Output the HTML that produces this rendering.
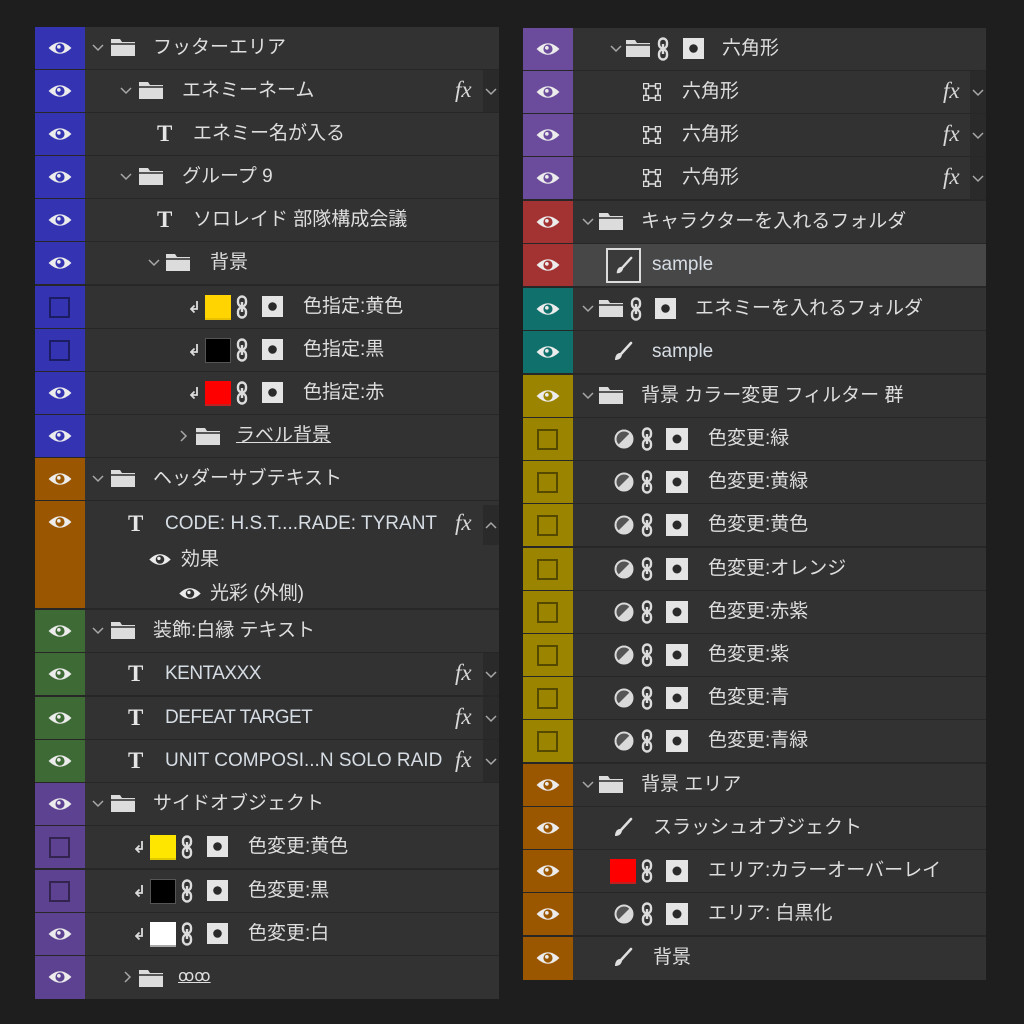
<!DOCTYPE html>
<html><head><meta charset="utf-8">
<style>
*{margin:0;padding:0;box-sizing:border-box}
body{width:1024px;height:1024px;background:#1e1e1e;position:relative;overflow:hidden;font-family:"Liberation Sans","Noto Sans CJK JP",sans-serif}
.p{position:absolute;background:#272727}
.r{position:absolute;left:0;right:0;height:42px;background:#323232}
.e{position:absolute;left:0;top:0;width:50px;height:100%}
.e>svg{left:12px!important;top:13px!important;width:26px;height:16px}
.bx{position:absolute;left:14px;top:11px;width:21px;height:21px;border:2px solid rgba(0,0,0,.45)}
.i{position:absolute}
.t{position:absolute;top:0;line-height:42px;font-size:19px;color:#dedede;white-space:nowrap}
.T{position:absolute;top:0;line-height:42px;font-size:23px;font-weight:bold;color:#e6e6e6;font-family:"Liberation Serif",serif}
.fx{position:absolute;top:0;line-height:40px;font-size:23px;font-style:italic;color:#d8d8d8;font-family:"Liberation Serif",serif}
.cb{position:absolute;top:0;width:16px;height:42px;background:#2a2a2a}
.sw{position:absolute;top:9px;width:26px;height:25px}
.u{text-decoration:underline}
</style></head><body>
<svg width="0" height="0" style="position:absolute">
<defs>
<symbol id="eye" viewBox="0 0 22 14"><path d="M1 7Q11 -3 21 7Q11 17 1 7Z" fill="#ececec"/><circle cx="11" cy="7" r="4" fill="currentColor"/><circle cx="10" cy="6" r="1.6" fill="#ececec"/></symbol>
<symbol id="ch" viewBox="0 0 12 8"><polyline points="1,1 6,6 11,1" fill="none" stroke="#a8a8a8" stroke-width="1.5"/></symbol>
<symbol id="cu" viewBox="0 0 12 8"><polyline points="1,7 6,2 11,7" fill="none" stroke="#a8a8a8" stroke-width="1.5"/></symbol>
<symbol id="cr" viewBox="0 0 8 12"><polyline points="1,1 6,6 1,11" fill="none" stroke="#a8a8a8" stroke-width="1.5"/></symbol>
<symbol id="fo" viewBox="0 0 26 20"><path d="M1 2h9l2 3h13v14H1z" fill="#dcdcdc"/><path d="M1 7h24" stroke="#2a2a2a" stroke-width="1.5"/></symbol>
<symbol id="ln" viewBox="0 0 12 24"><rect x="2" y="1.5" width="8" height="10" rx="4" fill="none" stroke="#dcdcdc" stroke-width="2.4"/><rect x="2" y="12.5" width="8" height="10" rx="4" fill="none" stroke="#dcdcdc" stroke-width="2.4"/><path d="M6 7v10" stroke="#dcdcdc" stroke-width="2.4"/></symbol>
<symbol id="mk" viewBox="0 0 22 22"><rect x="0" y="0" width="22" height="22" fill="#e4e4e4"/><circle cx="11" cy="11" r="4.5" fill="#2a2a2a"/></symbol>
<symbol id="adj" viewBox="0 0 20 20"><circle cx="10" cy="10" r="8.5" fill="#dadada"/><path d="M4 16L16 4A8.5 8.5 0 0 0 4 16Z" fill="#555"/><circle cx="10" cy="10" r="8.5" fill="none" stroke="#dadada" stroke-width="2"/></symbol>
<symbol id="br" viewBox="0 0 22 22"><path d="M19 2L9 13" stroke="#e0e0e0" stroke-width="2.6" stroke-linecap="round"/><path d="M8 12c-3 0-5 3-5 7c3 0 6-1 7-5z" fill="#e0e0e0"/></symbol>
<symbol id="sh" viewBox="0 0 18 18"><rect x="3" y="3" width="12" height="12" fill="none" stroke="#dcdcdc" stroke-width="1.6"/><rect x="0.5" y="0.5" width="5" height="5" fill="#323232" stroke="#dcdcdc" stroke-width="1.4"/><rect x="12.5" y="0.5" width="5" height="5" fill="#323232" stroke="#dcdcdc" stroke-width="1.4"/><rect x="0.5" y="12.5" width="5" height="5" fill="#323232" stroke="#dcdcdc" stroke-width="1.4"/><rect x="12.5" y="12.5" width="5" height="5" fill="#323232" stroke="#dcdcdc" stroke-width="1.4"/></symbol>
<symbol id="cl" viewBox="0 0 10 14"><path d="M7 1v8H2" fill="none" stroke="#dcdcdc" stroke-width="1.8"/><path d="M4.5 5.5L1 9l3.5 3.5" fill="none" stroke="#dcdcdc" stroke-width="1.8"/></symbol>
</defs></svg>

<!-- LEFT PANEL -->
<div class="p" style="left:35px;top:27px;width:464px;height:972px">
<div class="r" style="top:0"><div class="e" style="background:#3434b3;color:#3434b3"><svg class="i"><use href="#eye"/></svg></div>
<svg class="i" style="left:57px;top:17px" width="12" height="8"><use href="#ch"/></svg><svg class="i" style="left:75px;top:10px" width="26" height="20"><use href="#fo"/></svg><span class="t" style="left:118px">フッターエリア</span></div>
<div class="r" style="top:43px"><div class="e" style="background:#3434b3;color:#3434b3"><svg class="i"><use href="#eye"/></svg></div>
<svg class="i" style="left:85px;top:17px" width="12" height="8"><use href="#ch"/></svg><svg class="i" style="left:103px;top:10px" width="26" height="20"><use href="#fo"/></svg><span class="t" style="left:147px">エネミーネーム</span>
<span class="fx" style="left:420px">fx</span><div class="cb" style="left:448px"><svg class="i" style="left:2px;top:18px" width="12" height="8"><use href="#ch"/></svg></div></div>
<div class="r" style="top:86px"><div class="e" style="background:#3434b3;color:#3434b3"><svg class="i"><use href="#eye"/></svg></div>
<span class="T" style="left:122px">T</span><span class="t" style="left:158px">エネミー名が入る</span></div>
<div class="r" style="top:129px"><div class="e" style="background:#3434b3;color:#3434b3"><svg class="i"><use href="#eye"/></svg></div>
<svg class="i" style="left:85px;top:17px" width="12" height="8"><use href="#ch"/></svg><svg class="i" style="left:103px;top:10px" width="26" height="20"><use href="#fo"/></svg><span class="t" style="left:147px">グループ 9</span></div>
<div class="r" style="top:172px"><div class="e" style="background:#3434b3;color:#3434b3"><svg class="i"><use href="#eye"/></svg></div>
<span class="T" style="left:122px">T</span><span class="t" style="left:158px">ソロレイド 部隊構成会議</span></div>
<div class="r" style="top:215px"><div class="e" style="background:#3434b3;color:#3434b3"><svg class="i"><use href="#eye"/></svg></div>
<svg class="i" style="left:113px;top:17px" width="12" height="8"><use href="#ch"/></svg><svg class="i" style="left:130px;top:10px" width="26" height="20"><use href="#fo"/></svg><span class="t" style="left:175px">背景</span></div>
<div class="r" style="top:259px"><div class="e" style="background:#3434b3"><div class="bx"></div></div>
<svg class="i" style="left:155px;top:14px" width="10" height="14"><use href="#cl"/></svg><div class="sw" style="left:170px;background:#ffd400;border-bottom:2px solid #e8c000"></div><svg class="i" style="left:201px;top:9px" width="12" height="24"><use href="#ln"/></svg><svg class="i" style="left:227px;top:10px" width="21" height="21"><use href="#mk"/></svg><span class="t" style="left:268px">色指定:黄色</span></div>
<div class="r" style="top:302px"><div class="e" style="background:#3434b3"><div class="bx"></div></div>
<svg class="i" style="left:155px;top:14px" width="10" height="14"><use href="#cl"/></svg><div class="sw" style="left:170px;background:#000;border:1px solid #555"></div><svg class="i" style="left:201px;top:9px" width="12" height="24"><use href="#ln"/></svg><svg class="i" style="left:227px;top:10px" width="21" height="21"><use href="#mk"/></svg><span class="t" style="left:268px">色指定:黒</span></div>
<div class="r" style="top:345px"><div class="e" style="background:#3434b3;color:#3434b3"><svg class="i"><use href="#eye"/></svg></div>
<svg class="i" style="left:155px;top:14px" width="10" height="14"><use href="#cl"/></svg><div class="sw" style="left:170px;background:#ff0000;border-bottom:2px solid #c02020"></div><svg class="i" style="left:201px;top:9px" width="12" height="24"><use href="#ln"/></svg><svg class="i" style="left:227px;top:10px" width="21" height="21"><use href="#mk"/></svg><span class="t" style="left:268px">色指定:赤</span></div>
<div class="r" style="top:388px"><div class="e" style="background:#3434b3;color:#3434b3"><svg class="i"><use href="#eye"/></svg></div>
<svg class="i" style="left:145px;top:15px" width="8" height="12"><use href="#cr"/></svg><svg class="i" style="left:160px;top:11px" width="26" height="20"><use href="#fo"/></svg><span class="t u" style="left:201px">ラベル背景 </span></div>
<div class="r" style="top:431px"><div class="e" style="background:#9a5600;color:#9a5600"><svg class="i"><use href="#eye"/></svg></div>
<svg class="i" style="left:57px;top:17px" width="12" height="8"><use href="#ch"/></svg><svg class="i" style="left:75px;top:10px" width="26" height="20"><use href="#fo"/></svg><span class="t" style="left:118px">ヘッダーサブテキスト</span></div>
<div class="r" style="top:474px;height:107px"><div class="e" style="background:#9a5600;color:#9a5600"><svg class="i"><use href="#eye"/></svg></div>
<span class="T" style="left:93px;top:2px">T</span><span class="t" style="left:130px;top:2px;color:#d6dde4">CODE: H.S.T....RADE: TYRANT</span>
<span class="fx" style="left:420px;top:2px">fx</span><div class="cb" style="left:448px;top:4px;height:40px"><svg class="i" style="left:2px;top:16px" width="12" height="8"><use href="#cu"/></svg></div>
<svg class="i" style="left:113px;top:51px;color:#323232" width="24" height="15"><use href="#eye"/></svg><span class="t" style="left:146px;top:38px">効果</span>
<svg class="i" style="left:143px;top:85px;color:#323232" width="24" height="15"><use href="#eye"/></svg><span class="t" style="left:175px;top:72px">光彩 (外側)</span></div>
<div class="r" style="top:583px"><div class="e" style="background:#3e6a36;color:#3e6a36"><svg class="i"><use href="#eye"/></svg></div>
<svg class="i" style="left:57px;top:17px" width="12" height="8"><use href="#ch"/></svg><svg class="i" style="left:75px;top:10px" width="26" height="20"><use href="#fo"/></svg><span class="t" style="left:118px">装飾:白縁 テキスト</span></div>
<div class="r" style="top:626px"><div class="e" style="background:#3e6a36;color:#3e6a36"><svg class="i"><use href="#eye"/></svg></div>
<span class="T" style="left:93px">T</span><span class="t" style="left:130px;color:#d6dde4;letter-spacing:-0.5px">KENTAXXX</span><span class="fx" style="left:420px">fx</span><div class="cb" style="left:448px"><svg class="i" style="left:2px;top:18px" width="12" height="8"><use href="#ch"/></svg></div></div>
<div class="r" style="top:670px"><div class="e" style="background:#3e6a36;color:#3e6a36"><svg class="i"><use href="#eye"/></svg></div>
<span class="T" style="left:93px">T</span><span class="t" style="left:130px;color:#d6dde4;letter-spacing:-0.5px">DEFEAT TARGET</span><span class="fx" style="left:420px">fx</span><div class="cb" style="left:448px"><svg class="i" style="left:2px;top:18px" width="12" height="8"><use href="#ch"/></svg></div></div>
<div class="r" style="top:713px"><div class="e" style="background:#3e6a36;color:#3e6a36"><svg class="i"><use href="#eye"/></svg></div>
<span class="T" style="left:93px">T</span><span class="t" style="left:130px;color:#d6dde4">UNIT COMPOSI...N SOLO RAID</span><span class="fx" style="left:420px">fx</span><div class="cb" style="left:448px"><svg class="i" style="left:2px;top:18px" width="12" height="8"><use href="#ch"/></svg></div></div>
<div class="r" style="top:756px"><div class="e" style="background:#5c4290;color:#5c4290"><svg class="i"><use href="#eye"/></svg></div>
<svg class="i" style="left:57px;top:17px" width="12" height="8"><use href="#ch"/></svg><svg class="i" style="left:75px;top:10px" width="26" height="20"><use href="#fo"/></svg><span class="t" style="left:118px">サイドオブジェクト</span></div>
<div class="r" style="top:799px"><div class="e" style="background:#5c4290"><div class="bx"></div></div>
<svg class="i" style="left:100px;top:14px" width="10" height="14"><use href="#cl"/></svg><div class="sw" style="left:115px;background:#ffe600;border-bottom:2px solid #e0c800"></div><svg class="i" style="left:146px;top:9px" width="12" height="24"><use href="#ln"/></svg><svg class="i" style="left:172px;top:10px" width="21" height="21"><use href="#mk"/></svg><span class="t" style="left:213px">色変更:黄色</span></div>
<div class="r" style="top:843px"><div class="e" style="background:#5c4290"><div class="bx"></div></div>
<svg class="i" style="left:100px;top:14px" width="10" height="14"><use href="#cl"/></svg><div class="sw" style="left:115px;background:#000;border:1px solid #555"></div><svg class="i" style="left:146px;top:9px" width="12" height="24"><use href="#ln"/></svg><svg class="i" style="left:172px;top:10px" width="21" height="21"><use href="#mk"/></svg><span class="t" style="left:213px">色変更:黒</span></div>
<div class="r" style="top:886px"><div class="e" style="background:#5c4290;color:#5c4290"><svg class="i"><use href="#eye"/></svg></div>
<svg class="i" style="left:100px;top:14px" width="10" height="14"><use href="#cl"/></svg><div class="sw" style="left:115px;background:#fff;border-bottom:2px solid #aaa"></div><svg class="i" style="left:146px;top:9px" width="12" height="24"><use href="#ln"/></svg><svg class="i" style="left:172px;top:10px" width="21" height="21"><use href="#mk"/></svg><span class="t" style="left:213px">色変更:白</span></div>
<div class="r" style="top:929px;height:43px"><div class="e" style="background:#5c4290;color:#5c4290"><svg class="i"><use href="#eye"/></svg></div>
<svg class="i" style="left:89px;top:15px" width="8" height="12"><use href="#cr"/></svg><svg class="i" style="left:103px;top:12px" width="26" height="20"><use href="#fo"/></svg><span class="t u" style="left:143px;font-size:16px">ꝏꝏ</span></div>
</div>

<!-- RIGHT PANEL -->
<div class="p" style="left:523px;top:28px;width:463px;height:952px">
<div class="r" style="top:0"><div class="e" style="background:#6b4c9c;color:#6b4c9c"><svg class="i"><use href="#eye"/></svg></div>
<svg class="i" style="left:87px;top:17px" width="12" height="8"><use href="#ch"/></svg><svg class="i" style="left:102px;top:10px" width="26" height="20"><use href="#fo"/></svg><svg class="i" style="left:134px;top:9px" width="12" height="24"><use href="#ln"/></svg><svg class="i" style="left:160px;top:10px" width="21" height="21"><use href="#mk"/></svg><span class="t" style="left:199px">六角形</span></div>
<div class="r" style="top:43px"><div class="e" style="background:#6b4c9c;color:#6b4c9c"><svg class="i"><use href="#eye"/></svg></div>
<svg class="i" style="left:120px;top:12px" width="18" height="18"><use href="#sh"/></svg><span class="t" style="left:159px">六角形</span><span class="fx" style="left:420px">fx</span><div class="cb" style="left:447px"><svg class="i" style="left:2px;top:18px" width="12" height="8"><use href="#ch"/></svg></div></div>
<div class="r" style="top:86px"><div class="e" style="background:#6b4c9c;color:#6b4c9c"><svg class="i"><use href="#eye"/></svg></div>
<svg class="i" style="left:120px;top:12px" width="18" height="18"><use href="#sh"/></svg><span class="t" style="left:159px">六角形</span><span class="fx" style="left:420px">fx</span><div class="cb" style="left:447px"><svg class="i" style="left:2px;top:18px" width="12" height="8"><use href="#ch"/></svg></div></div>
<div class="r" style="top:129px"><div class="e" style="background:#6b4c9c;color:#6b4c9c"><svg class="i"><use href="#eye"/></svg></div>
<svg class="i" style="left:120px;top:12px" width="18" height="18"><use href="#sh"/></svg><span class="t" style="left:159px">六角形</span><span class="fx" style="left:420px">fx</span><div class="cb" style="left:447px"><svg class="i" style="left:2px;top:18px" width="12" height="8"><use href="#ch"/></svg></div></div>
<div class="r" style="top:173px"><div class="e" style="background:#a33232;color:#a33232"><svg class="i"><use href="#eye"/></svg></div>
<svg class="i" style="left:59px;top:17px" width="12" height="8"><use href="#ch"/></svg><svg class="i" style="left:75px;top:10px" width="26" height="20"><use href="#fo"/></svg><span class="t" style="left:118px">キャラクターを入れるフォルダ</span></div>
<div class="r" style="top:216px;background:#474747"><div class="e" style="background:#a33232;color:#a33232"><svg class="i"><use href="#eye"/></svg></div>
<div class="i" style="left:83px;top:4px;width:35px;height:35px;border:2px solid #dcdcdc;background:#3a3a3a"><svg class="i" style="left:6px;top:6px" width="20" height="20"><use href="#br"/></svg></div><span class="t" style="left:129px;color:#d6dde4">sample</span></div>
<div class="r" style="top:260px"><div class="e" style="background:#0f706c;color:#0f706c"><svg class="i"><use href="#eye"/></svg></div>
<svg class="i" style="left:59px;top:17px" width="12" height="8"><use href="#ch"/></svg><svg class="i" style="left:75px;top:10px" width="26" height="20"><use href="#fo"/></svg><svg class="i" style="left:107px;top:9px" width="12" height="24"><use href="#ln"/></svg><svg class="i" style="left:132px;top:10px" width="21" height="21"><use href="#mk"/></svg><span class="t" style="left:172px">エネミーを入れるフォルダ</span></div>
<div class="r" style="top:303px"><div class="e" style="background:#0f706c;color:#0f706c"><svg class="i"><use href="#eye"/></svg></div>
<svg class="i" style="left:89px;top:10px" width="22" height="22"><use href="#br"/></svg><span class="t" style="left:129px;color:#d6dde4">sample</span></div>
<div class="r" style="top:347px"><div class="e" style="background:#9b8500;color:#9b8500"><svg class="i"><use href="#eye"/></svg></div>
<svg class="i" style="left:59px;top:17px" width="12" height="8"><use href="#ch"/></svg><svg class="i" style="left:75px;top:10px" width="26" height="20"><use href="#fo"/></svg><span class="t" style="left:118px">背景 カラー変更 フィルター 群</span></div>

<div class="r" style="top:390px"><div class="e" style="background:#9b8500"><div class="bx"></div></div><svg class="i" style="left:91px;top:11px" width="20" height="20"><use href="#adj"/></svg><svg class="i" style="left:118px;top:9px" width="12" height="24"><use href="#ln"/></svg><svg class="i" style="left:143px;top:10px" width="22" height="22"><use href="#mk"/></svg><span class="t" style="left:185px">色変更:緑</span></div>
<div class="r" style="top:433px"><div class="e" style="background:#9b8500"><div class="bx"></div></div><svg class="i" style="left:91px;top:11px" width="20" height="20"><use href="#adj"/></svg><svg class="i" style="left:118px;top:9px" width="12" height="24"><use href="#ln"/></svg><svg class="i" style="left:143px;top:10px" width="22" height="22"><use href="#mk"/></svg><span class="t" style="left:185px">色変更:黄緑</span></div>
<div class="r" style="top:476px"><div class="e" style="background:#9b8500"><div class="bx"></div></div><svg class="i" style="left:91px;top:11px" width="20" height="20"><use href="#adj"/></svg><svg class="i" style="left:118px;top:9px" width="12" height="24"><use href="#ln"/></svg><svg class="i" style="left:143px;top:10px" width="22" height="22"><use href="#mk"/></svg><span class="t" style="left:185px">色変更:黄色</span></div>
<div class="r" style="top:520px"><div class="e" style="background:#9b8500"><div class="bx"></div></div><svg class="i" style="left:91px;top:11px" width="20" height="20"><use href="#adj"/></svg><svg class="i" style="left:118px;top:9px" width="12" height="24"><use href="#ln"/></svg><svg class="i" style="left:143px;top:10px" width="22" height="22"><use href="#mk"/></svg><span class="t" style="left:185px">色変更:オレンジ</span></div>
<div class="r" style="top:563px"><div class="e" style="background:#9b8500"><div class="bx"></div></div><svg class="i" style="left:91px;top:11px" width="20" height="20"><use href="#adj"/></svg><svg class="i" style="left:118px;top:9px" width="12" height="24"><use href="#ln"/></svg><svg class="i" style="left:143px;top:10px" width="22" height="22"><use href="#mk"/></svg><span class="t" style="left:185px">色変更:赤紫</span></div>
<div class="r" style="top:606px"><div class="e" style="background:#9b8500"><div class="bx"></div></div><svg class="i" style="left:91px;top:11px" width="20" height="20"><use href="#adj"/></svg><svg class="i" style="left:118px;top:9px" width="12" height="24"><use href="#ln"/></svg><svg class="i" style="left:143px;top:10px" width="22" height="22"><use href="#mk"/></svg><span class="t" style="left:185px">色変更:紫</span></div>
<div class="r" style="top:649px"><div class="e" style="background:#9b8500"><div class="bx"></div></div><svg class="i" style="left:91px;top:11px" width="20" height="20"><use href="#adj"/></svg><svg class="i" style="left:118px;top:9px" width="12" height="24"><use href="#ln"/></svg><svg class="i" style="left:143px;top:10px" width="22" height="22"><use href="#mk"/></svg><span class="t" style="left:185px">色変更:青</span></div>
<div class="r" style="top:692px"><div class="e" style="background:#9b8500"><div class="bx"></div></div><svg class="i" style="left:91px;top:11px" width="20" height="20"><use href="#adj"/></svg><svg class="i" style="left:118px;top:9px" width="12" height="24"><use href="#ln"/></svg><svg class="i" style="left:143px;top:10px" width="22" height="22"><use href="#mk"/></svg><span class="t" style="left:185px">色変更:青緑</span></div>

<div class="r" style="top:736px"><div class="e" style="background:#9b5600;color:#9b5600"><svg class="i"><use href="#eye"/></svg></div>
<svg class="i" style="left:59px;top:17px" width="12" height="8"><use href="#ch"/></svg><svg class="i" style="left:75px;top:10px" width="26" height="20"><use href="#fo"/></svg><span class="t" style="left:118px">背景 エリア</span></div>
<div class="r" style="top:779px"><div class="e" style="background:#9b5600;color:#9b5600"><svg class="i"><use href="#eye"/></svg></div>
<svg class="i" style="left:89px;top:10px" width="22" height="22"><use href="#br"/></svg><span class="t" style="left:130px">スラッシュオブジェクト</span></div>
<div class="r" style="top:822px"><div class="e" style="background:#9b5600;color:#9b5600"><svg class="i"><use href="#eye"/></svg></div>
<div class="sw" style="left:87px;background:#ff0000;border-bottom:2px solid #c02020"></div><svg class="i" style="left:118px;top:9px" width="12" height="24"><use href="#ln"/></svg><svg class="i" style="left:143px;top:10px" width="22" height="22"><use href="#mk"/></svg><span class="t" style="left:185px">エリア:カラーオーバーレイ</span></div>
<div class="r" style="top:865px"><div class="e" style="background:#9b5600;color:#9b5600"><svg class="i"><use href="#eye"/></svg></div>
<svg class="i" style="left:91px;top:11px" width="20" height="20"><use href="#adj"/></svg><svg class="i" style="left:118px;top:9px" width="12" height="24"><use href="#ln"/></svg><svg class="i" style="left:143px;top:10px" width="22" height="22"><use href="#mk"/></svg><span class="t" style="left:185px">エリア: 白黒化</span></div>
<div class="r" style="top:909px;height:43px"><div class="e" style="background:#9b5600;color:#9b5600"><svg class="i"><use href="#eye"/></svg></div>
<svg class="i" style="left:89px;top:10px" width="22" height="22"><use href="#br"/></svg><span class="t" style="left:130px">背景</span></div>
</div>
</body></html>
